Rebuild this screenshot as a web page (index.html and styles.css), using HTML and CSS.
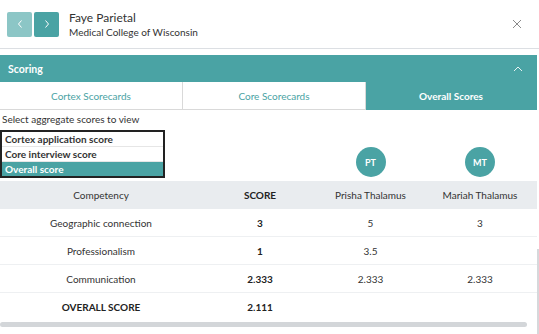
FILE: index.html
```html
<!DOCTYPE html>
<html lang="en">
<head>
    <meta charset="UTF-8">
    <meta name="viewport" content="width=device-width, initial-scale=1.0">
    <title>Faye Parietal - Scoring</title>
    <link rel="stylesheet" href="styles.css">
</head>
<body>
    <div id="drawer">
        <div id="drawer-header">
            <div class="nav-buttons">
                <button class="nav-button nav-prev">
                    <svg width="8" height="10" viewBox="0 0 8 10"><path d="M5.5 1.5 L2.5 5 L5.5 8.5" fill="none" stroke="#fff" stroke-width="1"/></svg>
                </button>
                <button class="nav-button nav-next">
                    <svg width="8" height="10" viewBox="0 0 8 10"><path d="M2.5 1.5 L5.5 5 L2.5 8.5" fill="none" stroke="#fff" stroke-width="1"/></svg>
                </button>
            </div>
            <div class="applicant">
                <div class="applicant-name">Faye Parietal</div>
                <div class="applicant-school">Medical College of Wisconsin</div>
            </div>
            <button class="close-button">
                <svg width="10" height="10" viewBox="0 0 10 10"><path d="M1 1 L9 9 M9 1 L1 9" stroke="#8a8a8a" stroke-width="1"/></svg>
            </button>
        </div>

        <div id="scoring-panel">
            <div class="panel-title">
                <span>Scoring</span>
                <svg width="10" height="6" viewBox="0 0 10 6"><path d="M1 5 L5 1 L9 5" fill="none" stroke="#e8f4f4" stroke-width="1"/></svg>
            </div>
            <div class="tabs">
                <div class="tab">Cortex Scorecards</div>
                <div class="tab">Core Scorecards</div>
                <div class="tab active">Overall Scores</div>
            </div>

            <div class="scores-area">
                <p class="select-label">Select aggregate scores to view</p>
                <div class="score-grid">
                    <div class="score-select">
                        <div class="option">Cortex application score</div>
                        <div class="option">Core interview score</div>
                        <div class="option selected">Overall score</div>
                    </div>
                    <div></div>
                    <div class="avatar-cell"><span class="avatar">PT</span></div>
                    <div class="avatar-cell"><span class="avatar">MT</span></div>

                    <div class="cell head">Competency</div>
                    <div class="cell head bold">SCORE</div>
                    <div class="cell head">Prisha Thalamus</div>
                    <div class="cell head">Mariah Thalamus</div>

                    <div class="cell">Geographic connection</div>
                    <div class="cell bold">3</div>
                    <div class="cell">5</div>
                    <div class="cell">3</div>

                    <div class="cell">Professionalism</div>
                    <div class="cell bold">1</div>
                    <div class="cell">3.5</div>
                    <div class="cell"></div>

                    <div class="cell">Communication</div>
                    <div class="cell bold">2.333</div>
                    <div class="cell">2.333</div>
                    <div class="cell">2.333</div>

                    <div class="cell bold last">OVERALL SCORE</div>
                    <div class="cell bold last">2.111</div>
                    <div class="cell last"></div>
                    <div class="cell last"></div>
                </div>
                <div class="h-scrollbar"><div class="h-thumb"></div></div>
                <div class="v-thumb"></div>
            </div>
        </div>
    </div>
</body>
</html>
```

FILE: styles.css
```css
body {
    margin: 0;
    font-family: Lato, "Open Sans", Arial, sans-serif;
    color: #333;
    background: #fff;
}
#drawer {
    width: 539px;
    height: 334px;
    overflow: hidden;
}

/* Header */
#drawer-header {
    display: flex;
    align-items: center;
    height: 48px;
    padding: 0 17px 0 7px;
    border-bottom: 1px solid #dcdfe3;
}
.nav-buttons {
    display: flex;
    gap: 2px;
}
.nav-button {
    width: 25px;
    height: 25px;
    border: none;
    border-radius: 2px;
    padding: 0;
    display: flex;
    align-items: center;
    justify-content: center;
}
.nav-prev {
    background-color: #8cc6c6;
}
.nav-next {
    background-color: #4aa3a4;
}
.applicant {
    margin-left: 10px;
    flex-grow: 1;
}
.applicant-name {
    font-size: 12px;
    line-height: 16px;
    color: #333;
}
.applicant-school {
    font-size: 10px;
    line-height: 13px;
    color: #333;
}
.close-button {
    border: none;
    background: none;
    padding: 0;
    display: flex;
}

/* Scoring panel */
#scoring-panel {
    margin-top: 6px;
    margin-right: 2px;
}
.panel-title {
    display: flex;
    justify-content: space-between;
    align-items: center;
    height: 27px;
    padding: 0 14px 0 8px;
    background-color: #4aa3a4;
    color: #fff;
    font-size: 10.5px;
    font-weight: bold;
}
.tabs {
    display: grid;
    grid-template-columns: 183px 183px 1fr;
    height: 28px;
}
.tab {
    display: flex;
    align-items: center;
    justify-content: center;
    font-size: 10px;
    color: #4aa3a4;
    border-right: 1px solid #d9d9d9;
    border-bottom: 1px solid #d9d9d9;
}
.tab.active {
    background-color: #4aa3a4;
    color: #fff;
    font-weight: bold;
    border-color: #4aa3a4;
}

/* Scores */
.scores-area {
    position: relative;
}
.select-label {
    margin: 0;
    padding: 3px 2px 0;
    height: 17px;
    font-size: 10px;
    line-height: 13px;
    color: #333;
}
.score-grid {
    display: grid;
    grid-template-columns: 202px 116px 105px 114px;
}
.score-select {
    width: 161px;
    border: 2px solid #222;
    margin-bottom: 3px;
}
.option {
    height: 14px;
    line-height: 14px;
    padding: 0 3px;
    font-size: 10px;
    font-weight: bold;
    color: #333;
    border-bottom: 1px solid #e6e6e6;
}
.option.selected {
    background-color: #4aa3a4;
    color: #fff;
    border-bottom: none;
}
.avatar-cell {
    display: flex;
    align-items: flex-end;
    justify-content: center;
    padding-bottom: 4px;
}
.avatar {
    width: 30px;
    height: 30px;
    border-radius: 50%;
    background-color: #4aa3a4;
    color: #fff;
    font-size: 9px;
    font-weight: bold;
    display: flex;
    align-items: center;
    justify-content: center;
}
.cell {
    height: 28px;
    display: flex;
    align-items: center;
    justify-content: center;
    font-size: 10px;
    color: #333;
    border-bottom: 1px solid #eef0f2;
    box-sizing: border-box;
}
.cell.head {
    background-color: #e9ecef;
    border-bottom: none;
}
.cell.bold {
    font-weight: bold;
    color: #222;
}
.cell.last {
    border-bottom: none;
}
.h-scrollbar {
    height: 6px;
    margin-top: 1px;
}
.h-thumb {
    width: 527px;
    height: 5px;
    border-radius: 3px;
    background-color: #d3d6d9;
}
.v-thumb {
    position: absolute;
    right: -2px;
    top: 139px;
    width: 2px;
    height: 90px;
    background-color: #d6d8db;
}
```
